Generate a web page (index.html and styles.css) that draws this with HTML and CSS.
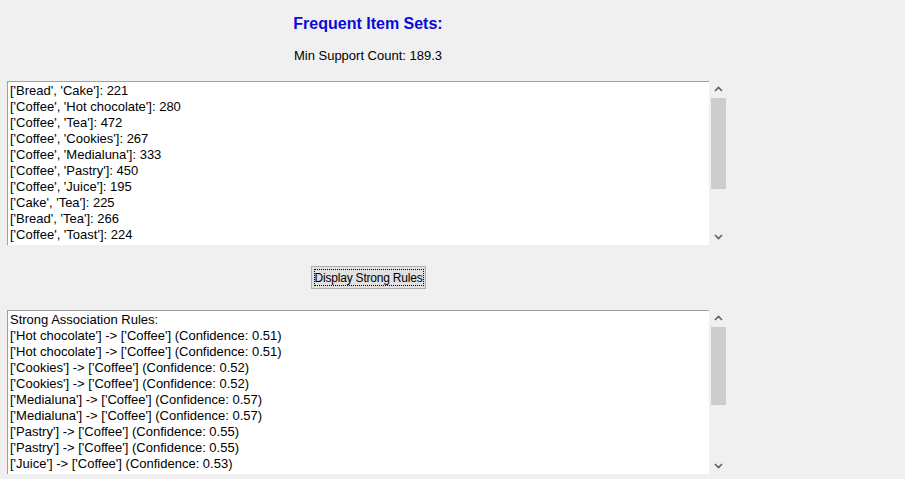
FILE: index.html
```html
<!DOCTYPE html>
<html>
<head>
<meta charset="utf-8">
<link rel="stylesheet" href="styles.css">
</head>
<body>
<div class="app">
  <div class="title">Frequent Item Sets:</div>
  <div class="support">Min Support Count: 189.3</div>
  <div class="textwrap">
    <div class="textbox">
      <div>['Bread', 'Cake']: 221</div>
      <div>['Coffee', 'Hot chocolate']: 280</div>
      <div>['Coffee', 'Tea']: 472</div>
      <div>['Coffee', 'Cookies']: 267</div>
      <div>['Coffee', 'Medialuna']: 333</div>
      <div>['Coffee', 'Pastry']: 450</div>
      <div>['Coffee', 'Juice']: 195</div>
      <div>['Cake', 'Tea']: 225</div>
      <div>['Bread', 'Tea']: 266</div>
      <div>['Coffee', 'Toast']: 224</div>
    </div>
    <div class="scrollbar">
      <svg class="arrow" width="17" height="16" viewBox="0 0 17 16"><polyline points="5,10 8.5,6.5 12,10" fill="none" stroke="#606060" stroke-width="1.6"/></svg>
      <div class="track"><div class="thumb thumb1"></div></div>
      <svg class="arrow" width="17" height="16" viewBox="0 0 17 16"><polyline points="5,6 8.5,9.5 12,6" fill="none" stroke="#606060" stroke-width="1.6"/></svg>
    </div>
  </div>
  <div class="btnrow"><button class="btn"><span class="focus">Display Strong Rules</span></button></div>
  <div class="textwrap second">
    <div class="textbox">
      <div>Strong Association Rules:</div>
      <div>['Hot chocolate'] -&gt; ['Coffee'] (Confidence: 0.51)</div>
      <div>['Hot chocolate'] -&gt; ['Coffee'] (Confidence: 0.51)</div>
      <div>['Cookies'] -&gt; ['Coffee'] (Confidence: 0.52)</div>
      <div>['Cookies'] -&gt; ['Coffee'] (Confidence: 0.52)</div>
      <div>['Medialuna'] -&gt; ['Coffee'] (Confidence: 0.57)</div>
      <div>['Medialuna'] -&gt; ['Coffee'] (Confidence: 0.57)</div>
      <div>['Pastry'] -&gt; ['Coffee'] (Confidence: 0.55)</div>
      <div>['Pastry'] -&gt; ['Coffee'] (Confidence: 0.55)</div>
      <div>['Juice'] -&gt; ['Coffee'] (Confidence: 0.53)</div>
    </div>
    <div class="scrollbar">
      <svg class="arrow" width="17" height="16" viewBox="0 0 17 16"><polyline points="5,10 8.5,6.5 12,10" fill="none" stroke="#606060" stroke-width="1.6"/></svg>
      <div class="track"><div class="thumb thumb2"></div></div>
      <svg class="arrow" width="17" height="16" viewBox="0 0 17 16"><polyline points="5,6 8.5,9.5 12,6" fill="none" stroke="#606060" stroke-width="1.6"/></svg>
    </div>
  </div>
</div>
</body>
</html>
```

FILE: styles.css
```css
html, body {
  margin: 0;
  padding: 0;
  background: #f0f0f0;
  height: 100%;
  overflow: hidden;
}
body {
  font-family: "Liberation Sans", Arial, sans-serif;
  font-size: 13px;
  color: #000;
}
.app {
  width: 722px;
  margin-left: 7px;
  display: flex;
  flex-direction: column;
  align-items: center;
}
.title {
  margin-top: 14px;
  font-size: 16px;
  font-weight: bold;
  line-height: 20px;
  color: #0a0ad8;
}
.support {
  margin-top: 14px;
  line-height: 16px;
}
.textwrap {
  align-self: stretch;
  display: flex;
  height: 164px;
  margin-top: 17px;
}
.textwrap.second {
  margin-top: 0;
}
.textbox {
  width: 702px;
  height: 164px;
  border-top: 1px solid #a0a0a0;
  border-left: 1px solid #a0a0a0;
  background: #fff;
  padding: 1px 2px 0 2px;
  box-sizing: border-box;
  line-height: 16px;
  overflow: hidden;
  white-space: nowrap;
}
.scrollbar {
  width: 17px;
  margin-left: 1px;
  display: flex;
  flex-direction: column;
  background: #f0f0f0;
}
.arrow {
  display: block;
  flex: none;
}
.track {
  flex: 1;
}
.thumb {
  background: #cdcdcd;
  margin-left: 1px;
  width: 15px;
}
.thumb1 {
  margin-top: 1px;
  height: 91px;
}
.thumb2 {
  margin-top: 1px;
  height: 78px;
}
.btnrow {
  height: 65px;
  display: flex;
  align-items: center;
}
.btn {
  font-family: "Liberation Sans", Arial, sans-serif;
  font-size: 12px;
  color: #000;
  background: #e1e1e1;
  border: 1px solid #adadad;
  padding: 2px;
  margin: 0;
  height: 23px;
  width: 115px;
  display: flex;
  align-items: stretch;
  white-space: nowrap;
}
.focus {
  flex: 1;
  border: 1px dotted #000;
  display: flex;
  align-items: center;
  justify-content: center;
  line-height: 14px;
  letter-spacing: -0.2px;
}
```
